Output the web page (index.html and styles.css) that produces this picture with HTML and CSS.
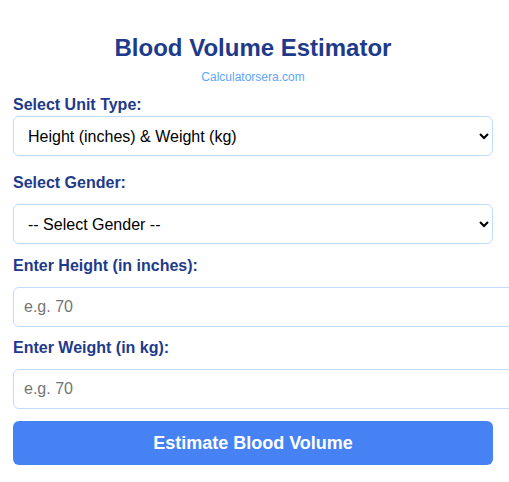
FILE: index.html
```html
<!DOCTYPE html>
<html lang="en">
<head>
    <meta charset="UTF-8">
    <meta name="viewport" content="width=device-width, initial-scale=1.0">
    <title>Blood Volume Estimator</title>
    <link rel="stylesheet" href="styles.css">
</head>
<body>

<div class="calculator">
    <h1>Blood Volume Estimator</h1>
    <p class="site-name">Calculatorsera.com</p>

    <label class="field-label unit-label" for="unitType">Select Unit Type:</label>
    <select id="unitType" class="field-control unit-select">
        <option>Height (inches) &amp; Weight (kg)</option>
        <option>Height (cm) &amp; Weight (kg)</option>
        <option>Height (inches) &amp; Weight (lbs)</option>
    </select>

    <label class="field-label" for="gender">Select Gender:</label>
    <select id="gender" class="field-control">
        <option>-- Select Gender --</option>
        <option>Male</option>
        <option>Female</option>
    </select>

    <label class="field-label" for="height">Enter Height (in inches):</label>
    <input type="number" id="height" class="field-control text-input" placeholder="e.g. 70">

    <label class="field-label" for="weight">Enter Weight (in kg):</label>
    <input type="number" id="weight" class="field-control text-input" placeholder="e.g. 70">

    <button class="estimate-button">Estimate Blood Volume</button>
</div>

</body>
</html>
```

FILE: styles.css
```css
html, body {
    overflow-x: hidden;
}
body {
    font-family: 'Liberation Sans', Arial, sans-serif;
    background-color: #ffffff;
    margin: 0;
    padding: 0;
}
.calculator {
    width: 480px;
    padding: 34px 13px 0;
}
.calculator h1 {
    color: #1e3a8a;
    text-align: center;
    font-size: 24px;
    line-height: 28px;
    margin: 0 0 8px;
}
.site-name {
    color: #60a5fa;
    text-align: center;
    font-size: 12px;
    line-height: 14px;
    margin: 0 0 12px;
}
.field-label {
    display: block;
    color: #1e3a8a;
    font-weight: bold;
    font-size: 16px;
    line-height: 18px;
    margin-bottom: 12px;
}
.unit-label {
    margin-bottom: 2px;
}
.field-control {
    display: block;
    width: 100%;
    font-family: 'Liberation Sans', Arial, sans-serif;
    font-size: 16px;
    line-height: 18px;
    padding: 10px;
    border: 1px solid #bfdbfe;
    border-radius: 6px;
    background-color: #ffffff;
    color: #000000;
    margin: 0 0 13px;
}
select.field-control {
    height: 40px;
    padding: 0 6px 0 10px;
}
.unit-select {
    margin-bottom: 18px;
}
.text-input {
    box-sizing: content-box;
    margin-bottom: 12px;
}
.text-input::placeholder {
    color: #757575;
}
.estimate-button {
    display: block;
    width: 100%;
    background-color: #4682f4;
    color: #ffffff;
    border: none;
    border-radius: 6px;
    font-family: 'Liberation Sans', Arial, sans-serif;
    font-size: 18px;
    font-weight: bold;
    line-height: 22px;
    padding: 11px 0;
    cursor: pointer;
}
```
